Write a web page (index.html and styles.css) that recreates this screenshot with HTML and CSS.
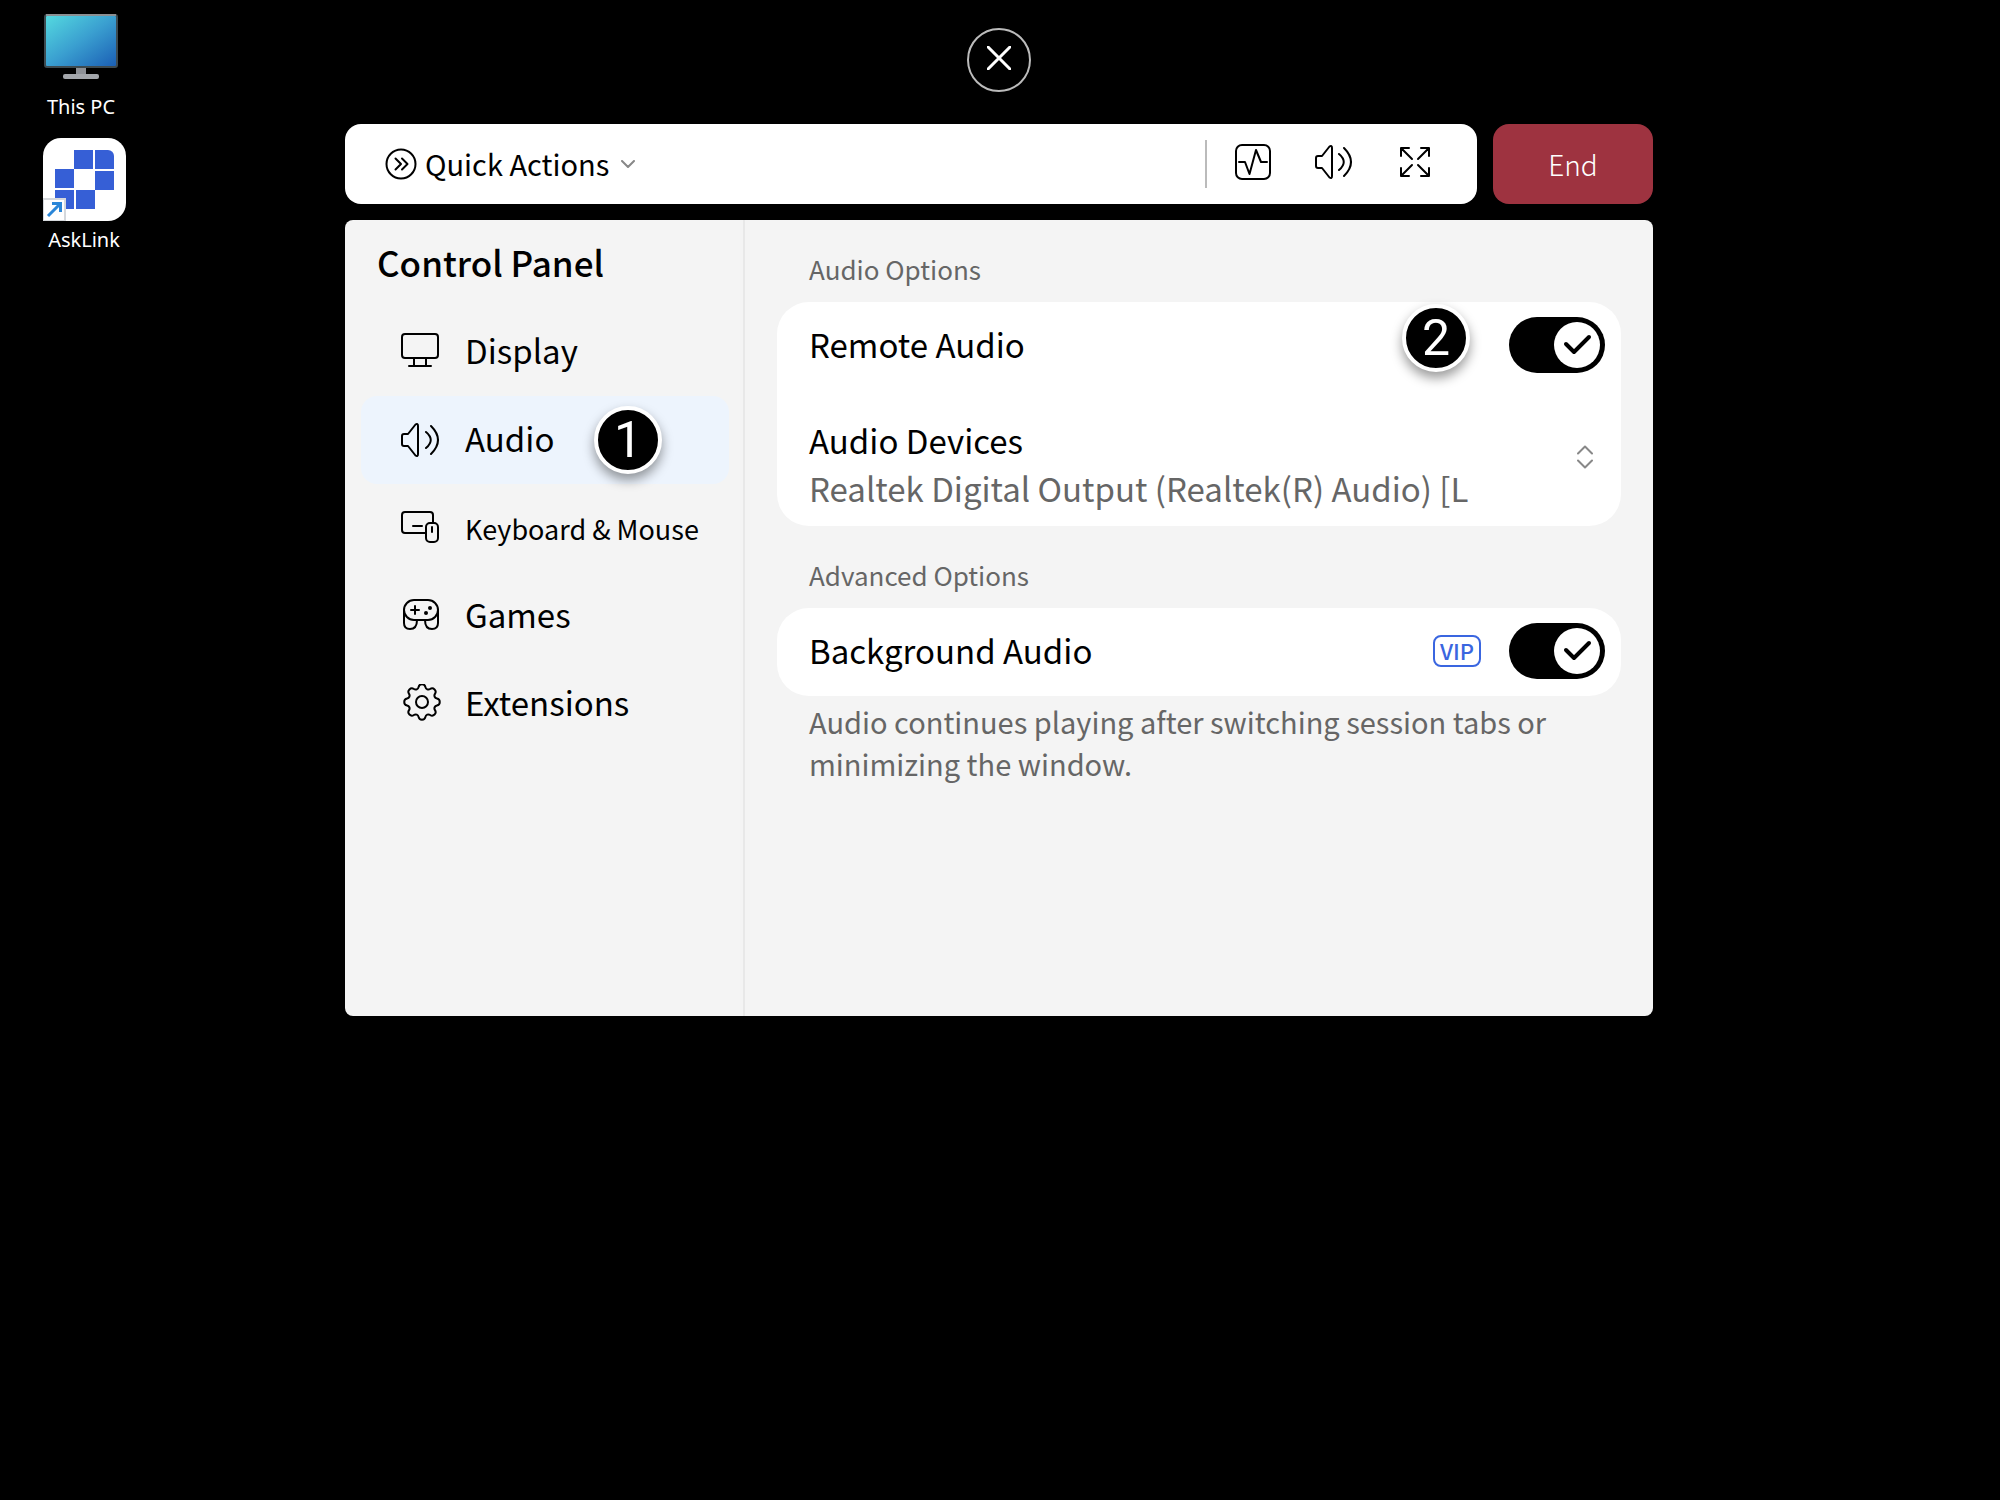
FILE: index.html
```
<!DOCTYPE html>
<html lang="en">
<head>
    <meta charset="utf-8">
    <title>Control Panel</title>
    <link rel="stylesheet" href="styles.css">
</head>
<body>
    <div class="desktop">
        <a href="#" class="shortcut">
            <svg width="74" height="66" viewBox="0 0 74 66">
                <defs>
                    <linearGradient id="screen" x1="0" y1="0" x2="1" y2="1">
                        <stop offset="0" stop-color="#55dbe0"/>
                        <stop offset="0.5" stop-color="#3a9fd0"/>
                        <stop offset="1" stop-color="#1a5db4"/>
                    </linearGradient>
                </defs>
                <path d="M32 53h10v8H32z" fill="#8d9096"/>
                <rect x="19" y="60" width="36" height="5" rx="2" fill="#a3a6ab"/>
                <rect x="1" y="1" width="72" height="52" rx="2" fill="url(#screen)" stroke="#3d4a50"/>
                <path d="M2 1h70" stroke="#8b8f92"/>
            </svg>
            <span>This PC</span>
        </a>
        <a href="#" class="shortcut">
            <svg width="83" height="83" viewBox="0 0 83 83">
                <path d="M18 0h47a18 18 0 0 1 18 18v47a18 18 0 0 1-18 18H0V18A18 18 0 0 1 18 0z" fill="#fff"/>
                <g fill="#365fd6">
                    <path d="M31 12h19v19H31zM12 31h19v19H12zM52 33h19v19H52zM12 52h19v19H12zM33 52h19v19H33z"/>
                    <path d="M52 12h13a6 6 0 0 1 6 6v13H52z"/>
                </g>
                <rect x="0" y="61" width="22" height="22" fill="#fff" stroke="#d5d8dc"/>
                <path d="M5 78 17 66M9 65.500h8.500V74" fill="none" stroke="#2a86d8" stroke-width="3"/>
            </svg>
            <span>AskLink</span>
        </a>
    </div>

    <main class="session">
        <button type="button" class="close" aria-label="Close">
            <svg width="24" height="24" viewBox="0 0 24 24">
                <path d="M1 1l22 22M23 1L1 23"/>
            </svg>
        </button>

        <div class="topbar">
            <div class="toolbar">
                <button type="button" class="quick">
                    <svg width="32" height="32" viewBox="0 0 32 32">
                        <circle cx="16" cy="16" r="14.500"/>
                        <path d="M10.500 10.500 16 16l-5.500 5.500M17 10.500l5.500 5.500-5.500 5.500"/>
                    </svg>
                    <span>Quick Actions</span>
                    <svg class="caret" width="14" height="8" viewBox="0 0 14 8">
                        <path d="M1 1l6 6 6-6"/>
                    </svg>
                </button>
                <div class="tools">
                    <button type="button" class="tool" aria-label="Performance">
                        <svg width="40" height="40" viewBox="0 0 40 40">
                            <rect x="3" y="3" width="34" height="34" rx="6"/>
                            <path d="M6 20h6l4.500 12L23 8l5 12h6"/>
                        </svg>
                    </button>
                    <button type="button" class="tool" aria-label="Volume">
                        <svg width="40" height="40" viewBox="0 0 40 40">
                            <path d="M4 14h4l7.500-9.500q2.500-1.500 2.500 1.500v28q0 3-2.500 1.500L8 26H4q-2 0-2-2v-8q0-2 2-2z"/>
                            <path d="M25 12q9.500 8 0 16M30 6q14 14 0 28"/>
                        </svg>
                    </button>
                    <button type="button" class="tool" aria-label="Full screen">
                        <svg width="40" height="40" viewBox="0 0 40 40">
                            <path d="M6 14V6h8M6 6l11 11M26 6h8v8M34 6 23 17M6 26v8h8M6 34l11-11M26 34h8v-8M34 34 23 23"/>
                        </svg>
                    </button>
                </div>
            </div>
            <button type="button" class="end">End</button>
        </div>

        <div class="panel">
            <aside class="sidebar">
                <h1>Control Panel</h1>
                <nav>
                    <a href="#" class="item">
                        <svg width="40" height="40" viewBox="0 0 40 40">
                            <rect x="1" y="2" width="36" height="24" rx="3"/>
                            <path d="M13 26v8M25 26v8M8 34h22"/>
                        </svg>
                        <span class="name">Display</span>
                    </a>
                    <a href="#" class="item active">
                        <svg width="40" height="40" viewBox="0 0 40 40">
                            <path d="M3 14h4l7.500-9.500q2.500-1.500 2.500 1.500v28q0 3-2.500 1.500L7 26H3q-2 0-2-2v-8q0-2 2-2z"/>
                            <path d="M25 12q9.500 8 0 16M30 6q14 14 0 28"/>
                        </svg>
                        <span class="name">Audio</span>
                        <span class="step step-one">1</span>
                    </a>
                    <a href="#" class="item small">
                        <svg width="40" height="40" viewBox="0 0 40 40">
                            <path d="M24 25H4q-3 0-3-3V7q0-3 3-3h25q3 0 3 3v8M12 18h9"/>
                            <rect x="25" y="15" width="12" height="19" rx="4"/>
                            <path d="M31 19v5"/>
                        </svg>
                        <span class="name">Keyboard &amp; Mouse</span>
                    </a>
                    <a href="#" class="item">
                        <svg width="40" height="40" viewBox="0 0 40 40">
                            <rect x="3" y="4" width="34" height="20" rx="10"/>
                            <path d="M3 14v13q0 6 6 6 7 0 7-9M37 14v13q0 6-6 6-7 0-7-9M10 14h8M14 10v8"/>
                            <circle class="dot" cx="29" cy="12" r="2"/>
                            <circle class="dot" cx="25" cy="17" r="2"/>
                        </svg>
                        <span class="name">Games</span>
                    </a>
                    <a href="#" class="item">
                        <svg width="40" height="40" viewBox="0 0 40 40">
                            <path transform="translate(21 18)" d="M-3.440-14.910A3.500 3.500 0 0 1 3.440-14.910A3 3 0 0 0 8.110-12.970A3.500 3.500 0 0 1 12.970-8.110A3 3 0 0 0 14.910-3.440A3.500 3.500 0 0 1 14.910 3.440A3 3 0 0 0 12.970 8.110A3.500 3.500 0 0 1 8.110 12.970A3 3 0 0 0 3.440 14.910A3.500 3.500 0 0 1-3.440 14.910A3 3 0 0 0-8.110 12.970A3.500 3.500 0 0 1-12.970 8.110A3 3 0 0 0-14.910 3.440A3.500 3.500 0 0 1-14.910-3.440A3 3 0 0 0-12.970-8.110A3.500 3.500 0 0 1-8.110-12.970A3 3 0 0 0-3.440-14.910z"/>
                            <circle cx="21" cy="18" r="6"/>
                        </svg>
                        <span class="name">Extensions</span>
                    </a>
                </nav>
            </aside>

            <section class="content">
                <h2>Audio Options</h2>
                <div class="card">
                    <div class="row">
                        <label for="remoteAudio">Remote Audio</label>
                        <span class="switch">
                            <input type="checkbox" id="remoteAudio" checked>
                            <svg width="46" height="46" viewBox="0 0 46 46">
                                <path d="M12 22l8 8 15-15"/>
                            </svg>
                        </span>
                    </div>
                    <div class="devices">
                        <label for="audioDevice">Audio Devices</label>
                        <select id="audioDevice">
                            <option>Realtek Digital Output (Realtek(R) Audio) [L</option>
                        </select>
                        <svg width="16" height="24" viewBox="0 0 16 24">
                            <path d="M1 8.500 8 1.500l7 7M1 15.500l7 7 7-7"/>
                        </svg>
                    </div>
                    <span class="step step-two">2</span>
                </div>

                <h2>Advanced Options</h2>
                <div class="card">
                    <div class="row">
                        <label for="backgroundAudio">Background Audio</label>
                        <span class="vip">VIP</span>
                        <span class="switch">
                            <input type="checkbox" id="backgroundAudio" checked>
                            <svg width="46" height="46" viewBox="0 0 46 46">
                                <path d="M12 22l8 8 15-15"/>
                            </svg>
                        </span>
                    </div>
                </div>
                <p class="hint">Audio continues playing after switching session tabs or minimizing the window.</p>
            </section>
        </div>
    </main>
</body>
</html>
```
FILE: styles.css
```
* {
    box-sizing: border-box;
}

body {
    margin: 0;
    padding-right: 2px;
    min-height: 100vh;
    background-color: #000;
    color: #000;
    font-family: "Noto Sans CJK SC", "Noto Sans", sans-serif;
    font-size: 33px;
}

button, select {
    font-family: inherit;
    color: inherit;
    background: none;
    border: none;
    padding: 0;
    cursor: pointer;
}

svg {
    display: block;
    flex: none;
    fill: none;
    stroke: #000;
    stroke-width: 2;
    stroke-linecap: round;
    stroke-linejoin: round;
}

/* desktop shortcuts sit on the background, under the session window */
.desktop {
    position: absolute;
    top: 14px;
    left: 32px;
    width: 104px;
    display: flex;
    flex-direction: column;
    gap: 16px;
}

.shortcut {
    display: flex;
    flex-direction: column;
    align-items: center;
    gap: 12px;
    padding-right: 6px;
    color: #fff;
    font-family: "Noto Sans", sans-serif;
    font-size: 20px;
    line-height: 30px;
    text-decoration: none;
}

.shortcut + .shortcut {
    gap: 4px;
    padding-right: 0;
}

.shortcut svg {
    stroke: none;
    stroke-linecap: butt;
    stroke-linejoin: miter;
}

.session {
    width: 100%;
    max-width: 1308px;
    margin: 0 auto;
    padding-top: 28px;
}

.close {
    display: flex;
    align-items: center;
    justify-content: center;
    width: 64px;
    height: 64px;
    margin: 0 auto 32px;
    padding-bottom: 4px;
    border: 2px solid #bbb;
    border-radius: 50%;
}

.close svg {
    stroke: #fff;
    stroke-width: 3;
}

.topbar {
    display: flex;
    gap: 16px;
    height: 80px;
    margin-bottom: 16px;
}

.toolbar {
    flex: 1;
    display: flex;
    align-items: center;
    justify-content: space-between;
    padding: 0 42px 0 40px;
    background-color: #fff;
    border-radius: 16px;
}

.quick {
    display: flex;
    align-items: center;
    gap: 8px;
    font-size: 29px;
}

.quick span {
    padding-bottom: 2px;
}

.quick .caret {
    margin-left: 4px;
    stroke: #888;
}

.tools {
    display: flex;
    align-items: center;
    gap: 41px;
    height: 48px;
    padding-left: 26px;
    border-left: 2px solid #bbb;
}

.tool {
    padding-bottom: 4px;
}

.end {
    width: 160px;
    background-color: #9e3340;
    border-radius: 16px;
    color: #fff;
    font-size: 28px;
    font-weight: 300;
}

.panel {
    display: flex;
    min-height: 796px;
    background-color: #f4f4f4;
    border-radius: 8px;
}

.sidebar {
    width: 400px;
    padding: 0 14px 16px 16px;
    border-right: 2px solid #e8e8e8;
}

.sidebar h1 {
    margin: 0;
    padding: 0 0 4px 16px;
    font-size: 35px;
    font-weight: 500;
    line-height: 84px;
}

.item {
    position: relative;
    display: flex;
    align-items: center;
    gap: 24px;
    height: 88px;
    padding-left: 40px;
    border-radius: 16px;
    color: #000;
    text-decoration: none;
}

.item.active {
    background-color: #edf4fd;
}

.item.small {
    font-size: 27px;
}

.item .name {
    padding-bottom: 4px;
}

.item.small .name {
    padding-bottom: 0;
}

.item .dot {
    fill: #000;
    stroke: none;
}

/* numbered markers */
.step {
    position: absolute;
    width: 68px;
    height: 68px;
    background-color: #000;
    border: 4px solid #fff;
    border-radius: 50%;
    box-shadow: 0 6px 12px rgba(0, 0, 0, 0.4);
    color: #fff;
    font-family: Roboto, sans-serif;
    font-size: 50px;
    font-weight: 400;
    line-height: 60px;
    text-align: center;
}

.step-one {
    top: 10px;
    left: 233px;
}

.step-two {
    top: 2px;
    right: 151px;
}

.content {
    flex: 1;
    padding: 32px;
}

.content h2 {
    margin: 0 0 16px;
    padding-left: 32px;
    color: #666;
    font-size: 26px;
    font-weight: 400;
    line-height: 34px;
}

.card {
    position: relative;
    background-color: #fff;
    border-radius: 32px;
}

.card + h2 {
    margin-top: 32px;
}

.row {
    display: flex;
    align-items: center;
    height: 88px;
    padding: 0 16px 2px 32px;
}

.row label {
    flex: 1;
    padding-bottom: 2px;
}

.switch {
    position: relative;
    width: 96px;
    height: 56px;
}

.switch input {
    appearance: none;
    width: 96px;
    height: 56px;
    margin: 0;
    display: block;
    background-color: #999;
    border-radius: 28px;
    cursor: pointer;
}

.switch input:checked {
    background-color: #000;
}

.switch svg {
    position: absolute;
    top: 5px;
    left: 5px;
    background-color: #fff;
    border-radius: 50%;
    stroke-width: 4;
    pointer-events: none;
}

.switch input:checked + svg {
    left: 45px;
}

.vip {
    width: 48px;
    height: 32px;
    margin-right: 28px;
    border: 2px solid #3a66e0;
    border-radius: 8px;
    color: #3a66e0;
    font-size: 22px;
    font-weight: 500;
    line-height: 26px;
    text-align: center;
}

.devices {
    display: grid;
    grid-template-columns: 1fr 16px;
    align-items: center;
    padding: 26px 28px 14px 32px;
    line-height: 48px;
}

.devices select {
    appearance: none;
    width: 100%;
    height: 48px;
    color: #666;
    font-size: 33px;
    line-height: 48px;
}

.devices svg {
    grid-column: 2;
    grid-row: 1 / 3;
    margin-bottom: 14px;
    stroke: #888;
}

.hint {
    margin: 4px 0 0;
    padding: 0 32px;
    color: #666;
    font-size: 29px;
    line-height: 42px;
}
```
